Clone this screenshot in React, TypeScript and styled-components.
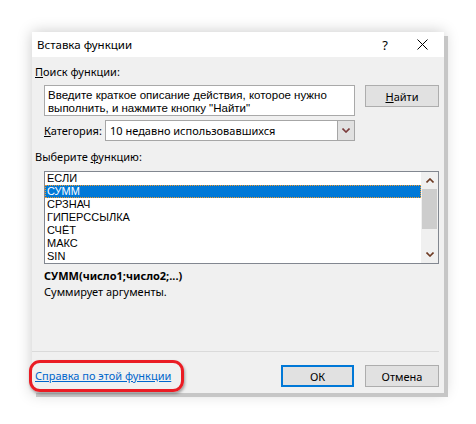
import styled, { createGlobalStyle } from 'styled-components';

const GlobalStyle = createGlobalStyle`
  html, body {
    margin: 0;
    background: #ffffff;
  }
  body {
    font-family: 'Noto Sans', 'Liberation Sans', sans-serif;
    font-size: 11px;
    color: #000;
  }
`;

const Page = styled.div`
  padding: 32px 0 0 32px;
  height: 424px;
  box-sizing: border-box;
`;

const Dialog = styled.div`
  width: 412px;
  height: 361px;
  display: flex;
  flex-direction: column;
  background: #f0f0f0;
  box-shadow: 4px 4px 0 #c6c6c6, 0 0 14px rgba(0, 0, 0, 0.22);
`;

const TitleBar = styled.div`
  height: 25px;
  background: #fff;
  display: flex;
  align-items: center;
`;

const Title = styled.div`
  flex: 1;
  padding-left: 5px;
  font-size: 11.5px;
`;

const TitleButton = styled.div<{ $w: number }>`
  width: ${p => p.$w}px;
  height: 25px;
  display: flex;
  align-items: center;
  justify-content: center;
  font-size: 13px;
`;

const Body = styled.div`
  flex: 1;
  display: flex;
  flex-direction: column;
  padding: 7px 5px 6px 3px;
`;

const Label = styled.div<{ $mt?: number }>`
  line-height: 16px;
  margin-top: ${p => p.$mt ?? 0}px;
  white-space: nowrap;
`;

const Row = styled.div<{ $mt: number }>`
  display: flex;
  align-items: flex-start;
  margin-top: ${p => p.$mt}px;
  padding-left: 9px;
`;

const SearchBox = styled.div`
  width: 311px;
  height: 31px;
  box-sizing: border-box;
  border: 1px solid #a9a9a9;
  background: #fff;
  padding: 3px 0 0 3px;
  font-family: 'Liberation Sans', 'Noto Sans', sans-serif;
  font-size: 11.5px;
  line-height: 13px;
  white-space: nowrap;
  overflow: hidden;
`;

const Button = styled.div<{ $w: number; $primary?: boolean }>`
  width: ${p => p.$w}px;
  height: 22px;
  box-sizing: border-box;
  background: #e1e1e1;
  border: ${p => (p.$primary ? '2px solid #0078d7' : '1px solid #adadad')};
  display: flex;
  align-items: center;
  justify-content: center;
`;

const CategoryLabel = styled.div`
  width: 61px;
  line-height: 21px;
  white-space: nowrap;
`;

const Select = styled.div`
  width: 250px;
  height: 21px;
  box-sizing: border-box;
  border: 1px solid #a6a6a6;
  background: #fff;
  display: flex;
  align-items: stretch;
`;

const SelectValue = styled.div`
  flex: 1;
  padding-left: 4px;
  line-height: 19px;
  white-space: nowrap;
  overflow: hidden;
`;

const SelectArrow = styled.div`
  width: 16px;
  background: #e1e1e1;
  border-left: 1px solid #a6a6a6;
  display: flex;
  align-items: center;
  justify-content: center;
`;

const ListBox = styled.div`
  width: 395px;
  height: 93px;
  box-sizing: border-box;
  border: 1px solid #828790;
  background: #fff;
  display: flex;
`;

const Items = styled.div`
  flex: 1;
  display: flex;
  flex-direction: column;
`;

const Item = styled.div<{ $selected?: boolean }>`
  height: 13px;
  line-height: 13px;
  padding-left: 2px;
  box-sizing: border-box;
  font-family: 'Liberation Sans', 'Noto Sans', sans-serif;
  font-size: 11px;
  color: ${p => (p.$selected ? '#fff' : '#000')};
  background: ${p => (p.$selected ? '#0078d7' : 'transparent')};
  outline: ${p => (p.$selected ? '1px dotted #f39a2b' : 'none')};
  outline-offset: -1px;
`;

const Scrollbar = styled.div`
  width: 17px;
  background: #f0f0f0;
  display: flex;
  flex-direction: column;
  align-items: center;
`;

const ScrollArrow = styled.div`
  height: 17px;
  display: flex;
  align-items: center;
  justify-content: center;
`;

const Thumb = styled.div`
  width: 15px;
  height: 40px;
  background: #cdcdcd;
`;

const ScrollGap = styled.div`
  flex: 1;
`;

const Signature = styled.div`
  font-weight: bold;
  line-height: 16px;
  margin-top: 4px;
  padding-left: 9px;
`;

const Description = styled.div`
  line-height: 16px;
  padding-left: 9px;
`;

const Spacer = styled.div`
  flex: 1;
`;

const Separator = styled.div`
  height: 1px;
  background: #dadada;
  margin: 0 0 0 -3px;
`;

const Footer = styled.div`
  display: flex;
  align-items: center;
  margin-top: 13px;
`;

const HelpLink = styled.span`
  position: relative;
  color: #0066cc;
  text-decoration: underline;
  line-height: 16px;

  &::after {
    content: '';
    position: absolute;
    left: -6px;
    right: -13px;
    top: -8px;
    bottom: -8px;
    border: 3px solid #ea1c24;
    border-radius: 11px;
    box-shadow: 1px 2px 3px rgba(0, 0, 0, 0.35);
  }
`;

const ButtonGroup = styled.div`
  margin-left: auto;
  display: flex;
  gap: 11px;
`;

const Chevron = ({ up, color }: { up?: boolean; color: string }) => (
  <svg width="8" height="5" viewBox="0 0 8 5">
    <path
      d={up ? 'M0.5 4.5 L4 1 L7.5 4.5' : 'M0.5 0.5 L4 4 L7.5 0.5'}
      fill="none"
      stroke={color}
      strokeWidth="1.6"
    />
  </svg>
);

const functions = ['ЕСЛИ', 'СУММ', 'СРЗНАЧ', 'ГИПЕРССЫЛКА', 'СЧЁТ', 'МАКС', 'SIN'];

export default function App() {
  return (
    <Page>
      <GlobalStyle />
      <Dialog>
        <TitleBar>
          <Title>Вставка функции</Title>
          <TitleButton $w={30}>?</TitleButton>
          <TitleButton $w={44}>
            <svg width="11" height="11" viewBox="0 0 11 11">
              <path d="M0.5 0.5 L10.5 10.5 M10.5 0.5 L0.5 10.5" stroke="#000" strokeWidth="1" />
            </svg>
          </TitleButton>
        </TitleBar>
        <Body>
          <Label>
            <u>П</u>оиск функции:
          </Label>
          <Row $mt={5}>
            <SearchBox>
              Введите краткое описание действия, которое нужно
              <br />
              выполнить, и нажмите кнопку "Найти"
            </SearchBox>
            <Button $w={74} style={{ marginLeft: 10 }}>
              <span>
                <u>Н</u>айти
              </span>
            </Button>
          </Row>
          <Row $mt={4}>
            <CategoryLabel>
              <u>К</u>атегория:
            </CategoryLabel>
            <Select>
              <SelectValue>10 недавно использовавшихся</SelectValue>
              <SelectArrow>
                <Chevron color="#7b3b3b" />
              </SelectArrow>
            </Select>
          </Row>
          <Label $mt={8}>
            Выберите <u>ф</u>ункцию:
          </Label>
          <Row $mt={6}>
            <ListBox>
              <Items>
                {functions.map(f => (
                  <Item key={f} $selected={f === 'СУММ'}>
                    {f}
                  </Item>
                ))}
              </Items>
              <Scrollbar>
                <ScrollArrow>
                  <Chevron up color="#6e3b24" />
                </ScrollArrow>
                <Thumb />
                <ScrollGap />
                <ScrollArrow>
                  <Chevron color="#6e3b24" />
                </ScrollArrow>
              </Scrollbar>
            </ListBox>
          </Row>
          <Signature>СУММ(число1;число2;...)</Signature>
          <Description>Суммирует аргументы.</Description>
          <Spacer />
          <Separator />
          <Footer>
            <HelpLink>Справка по этой функции</HelpLink>
            <ButtonGroup>
              <Button $w={73} $primary>
                ОК
              </Button>
              <Button $w={74}>Отмена</Button>
            </ButtonGroup>
          </Footer>
        </Body>
      </Dialog>
    </Page>
  );
}
